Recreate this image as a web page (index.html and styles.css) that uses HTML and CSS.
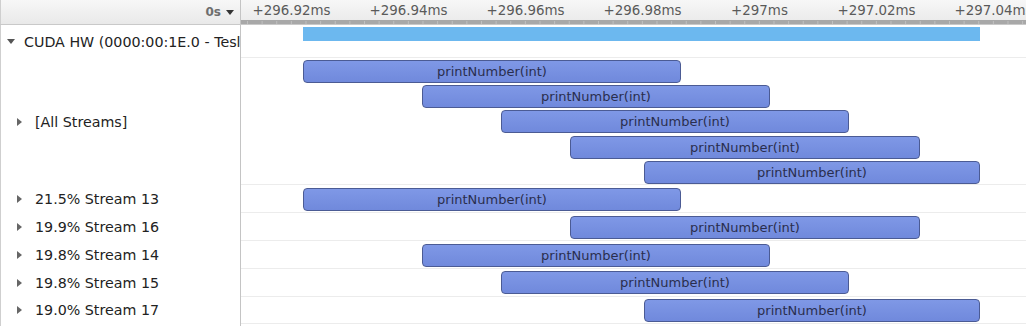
FILE: index.html
```html
<!DOCTYPE html>
<html lang="en">
<head>
  <meta charset="UTF-8" />
  <title>Timeline</title>
  <link rel="stylesheet" href="styles.css">
</head>
<body>

  <div class="timeline">
    <div class="row header">
      <div class="label head-label">0s <span class="caret-down small"></span></div>
      <div class="ruler">
        <div class="ticks">
          <span>+296.92ms</span>
          <span>+296.94ms</span>
          <span>+296.96ms</span>
          <span>+296.98ms</span>
          <span>+297ms</span>
          <span>+297.02ms</span>
          <span>+297.04ms</span>
        </div>
      </div>
    </div>

    <div class="row device">
      <div class="label"><span class="caret-down"></span><span class="name">CUDA HW (0000:00:1E.0 - Tesla T4)</span></div>
      <div class="track">
        <div class="usage" style="left: 62px; width: 677px"></div>
      </div>
    </div>

    <div class="row all">
      <div class="label indent"><span class="caret-right"></span>[All Streams]</div>
      <div class="track lanes">
        <div class="lane"><div class="kernel" style="left: 62px; width: 378px">printNumber(int)</div></div>
        <div class="lane"><div class="kernel" style="left: 181px; width: 348px">printNumber(int)</div></div>
        <div class="lane"><div class="kernel" style="left: 260px; width: 348px">printNumber(int)</div></div>
        <div class="lane"><div class="kernel" style="left: 329px; width: 350px">printNumber(int)</div></div>
        <div class="lane"><div class="kernel" style="left: 403px; width: 336px">printNumber(int)</div></div>
      </div>
    </div>

    <div class="row stream">
      <div class="label indent"><span class="caret-right"></span>21.5% Stream 13</div>
      <div class="track lanes"><div class="lane"><div class="kernel" style="left: 62px; width: 378px">printNumber(int)</div></div></div>
    </div>
    <div class="row stream">
      <div class="label indent"><span class="caret-right"></span>19.9% Stream 16</div>
      <div class="track lanes"><div class="lane"><div class="kernel" style="left: 329px; width: 350px">printNumber(int)</div></div></div>
    </div>
    <div class="row stream short">
      <div class="label indent"><span class="caret-right"></span>19.8% Stream 14</div>
      <div class="track lanes"><div class="lane"><div class="kernel" style="left: 181px; width: 348px">printNumber(int)</div></div></div>
    </div>
    <div class="row stream">
      <div class="label indent"><span class="caret-right"></span>19.8% Stream 15</div>
      <div class="track lanes"><div class="lane"><div class="kernel" style="left: 260px; width: 348px">printNumber(int)</div></div></div>
    </div>
    <div class="row stream short">
      <div class="label indent"><span class="caret-right"></span>19.0% Stream 17</div>
      <div class="track lanes"><div class="lane"><div class="kernel" style="left: 403px; width: 336px">printNumber(int)</div></div></div>
    </div>
    <div class="row filler">
      <div class="label"></div>
      <div class="track"></div>
    </div>
  </div>

</body>
</html>
```

FILE: styles.css
```css
body {
  margin: 0;
  background: #ffffff;
  font-family: 'DejaVu Sans', Verdana, sans-serif;
  color: #222222;
  overflow: hidden;
}
.timeline {
  display: flex;
  flex-direction: column;
  width: 1026px;
  height: 326px;
}
.row {
  display: flex;
  flex: none;
}
.label {
  box-sizing: border-box;
  width: 241px;
  flex: none;
  display: flex;
  align-items: center;
  border-left: 1px solid #cfcfcf;
  border-right: 1px solid #c4c4c4;
  font-size: 14.25px;
  white-space: nowrap;
  overflow: hidden;
  padding-left: 4px;
}
.track {
  flex: 1;
  position: relative;
  border-bottom: 1px solid #ececec;
}

/* header */
.header {
  height: 25px;
  background: linear-gradient(#f7f7f7, #e9e9e9);
  border-bottom: 1px solid #c9c9c9;
  box-sizing: border-box;
}
.head-label {
  justify-content: flex-end;
  padding-right: 6px;
  color: #6e6e6e;
  font-size: 12px;
  font-weight: bold;
  gap: 5px;
}
.ruler {
  flex: 1;
  overflow: hidden;
  background-image:
    linear-gradient(#a8a8a8, #a8a8a8);
  background-size: 1px 4px;
  background-repeat: repeat-x;
  background-position: 50px 20px;
  position: relative;
}
.ruler::after {
  content: "";
  position: absolute;
  inset: 0;
  background-image: linear-gradient(to right, #c0c0c0 0, #c0c0c0 1px, transparent 1px);
  background-size: 14.625px 3px;
  background-repeat: repeat-x;
  background-position: 6px 21px;
}
.ticks {
  display: flex;
  margin-left: -8px;
  font-size: 13.4px;
  color: #5a5a5a;
  line-height: 22px;
}
.ticks span {
  width: 117px;
  flex: none;
  text-align: center;
}

/* carets */
.caret-down {
  width: 0;
  height: 0;
  border-left: 4px solid transparent;
  border-right: 4px solid transparent;
  border-top: 5px solid #555555;
  margin: 0 9px 0 2px;
}
.caret-down.small {
  border-top-color: #333333;
  margin: 0;
}
.caret-right {
  width: 0;
  height: 0;
  border-top: 4px solid transparent;
  border-bottom: 4px solid transparent;
  border-left: 5px solid #666666;
  margin: 0 13px 0 12px;
}

/* rows */
.device {
  height: 33px;
}
.usage {
  position: absolute;
  top: 2px;
  height: 14px;
  background: #6cb8ef;
}
.all {
  height: 127px;
}
.lanes {
  display: flex;
  flex-direction: column;
  gap: 2.2px;
  padding-top: 2px;
}
.lane {
  position: relative;
  height: 23px;
  flex: none;
}
.kernel {
  position: absolute;
  top: 0;
  bottom: 0;
  box-sizing: border-box;
  border: 1px solid #4b5b94;
  border-radius: 4px;
  background: linear-gradient(#7f98e6, #7089dc);
  color: #2a2e4e;
  font-size: 13px;
  line-height: 21px;
  text-align: center;
  white-space: nowrap;
  overflow: hidden;
}
.stream {
  height: 28px;
}
.stream.short {
  height: 27.5px;
}
.stream .lanes {
  padding-top: 2.5px;
}
.filler {
  flex: 1;
}
.filler .track {
  border-bottom: none;
}
```
